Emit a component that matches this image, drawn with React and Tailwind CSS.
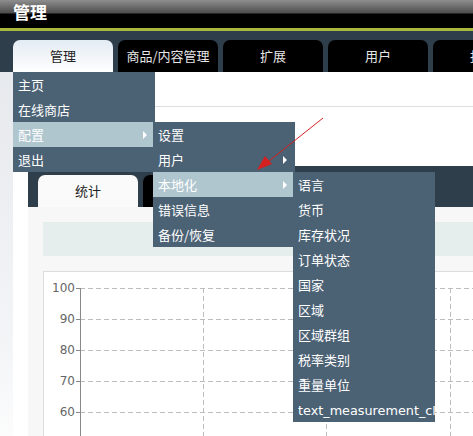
import React from 'react'

const topTabs = ['管理', '商品/内容管理', '扩展', '用户', '报表']

const menuMain = [
  { label: '主页' },
  { label: '在线商店' },
  { label: '配置', active: true, sub: true },
  { label: '退出' },
]

const menuConfig = [
  { label: '设置' },
  { label: '用户', sub: true },
  { label: '本地化', active: true, sub: true },
  { label: '错误信息' },
  { label: '备份/恢复' },
]

const menuLocal = [
  '语言', '货币', '库存状况', '订单状态', '国家', '区域', '区域群组', '税率类别', '重量单位', 'text_measurement_class',
]

function Arrow() {
  return (
    <span className="absolute right-[8px] top-[9px] w-0 h-0 border-y-[4px] border-y-transparent border-l-[4px] border-l-white" />
  )
}

function MenuRow({ label, active, sub }) {
  return (
    <div className={`relative h-[25px] leading-[25px] pl-[5px] whitespace-nowrap overflow-hidden ${active ? 'bg-[#afc6cf]' : ''}`}>
      {label}
      {sub && <Arrow />}
    </div>
  )
}

function Chart() {
  const rows = [100, 90, 80, 70, 60]
  return (
    <svg width="440" height="170" className="block">
      {rows.map((v, i) => {
        const y = 16 + i * 31
        return (
          <g key={v}>
            <line x1="36" x2="440" y1={y + 0.5} y2={y + 0.5} stroke="#bdbdbd" strokeDasharray="5 3" />
            <line x1="32" x2="36" y1={y + 0.5} y2={y + 0.5} stroke="#888" />
            <text x="31" y={y + 4} textAnchor="end" fontSize="12" fill="#666" fontFamily="DejaVu Sans, sans-serif">{v}</text>
          </g>
        )
      })}
      {[159, 282, 406].map(x => (
        <line key={x} x1={x + 0.5} x2={x + 0.5} y1="16" y2="170" stroke="#bdbdbd" strokeDasharray="5 3" />
      ))}
      <line x1="36.5" x2="36.5" y1="16" y2="170" stroke="#888" />
    </svg>
  )
}

export default function App() {
  return (
    <div className="relative w-[473px] h-[436px] overflow-hidden bg-white font-['Noto_Sans_CJK_SC',sans-serif] text-[13px]">
      {/* header */}
      <div className="h-[28px] bg-[linear-gradient(to_bottom,#8e8e8e_0px,#4c4c4c_13px,#000_14px,#000_28px)] pl-[13px] text-white font-bold text-[17px] leading-[24px]">
        管理
      </div>
      <div className="h-[3px] bg-[#a9b83f]" />
      <div className="bg-[#2f3e4b] pt-[9px] pl-[13px] flex gap-[5px] w-[700px]">
        {topTabs.map((t, i) => (
          <div
            key={t}
            className={`w-[100px] h-[32px] shrink-0 rounded-t-[7px] flex items-center justify-center ${i === 0 ? 'bg-gradient-to-b from-[#e3ebf3] to-white text-[#222]' : 'bg-black text-[#e6e6e6]'}`}
          >
            {t}
          </div>
        ))}
      </div>

      {/* body */}
      <div className="flex">
        <div className="w-[13px] shrink-0 bg-[linear-gradient(to_bottom,#e6e9ed,#f4f5f7_70%,#ffffff)]" />
        <div className="flex-1 flex flex-col">
          <div className="h-[35px] shrink-0 border-b border-[#dedede]" />
          <div className="h-[59px] shrink-0" />
          <div className="ml-[15px] w-[600px] shrink-0 bg-[#f7f7f7]">
            <div className="bg-[#2f3e4b] pt-[9px] pl-[10px] flex gap-[5px]">
              <div className="w-[100px] h-[32px] rounded-t-[7px] bg-[#fafafa] text-[#222] flex items-center justify-center">统计</div>
              <div className="w-[100px] h-[32px] rounded-t-[7px] bg-black" />
            </div>
            <div className="pt-[15px] pl-[15px]">
              <div className="h-[34px] bg-[#e5eded]" />
              <div className="mt-[15px] border-t border-l border-[#dddddd] bg-white h-[200px]">
                <Chart />
              </div>
            </div>
          </div>
        </div>
      </div>

      {/* dropdown menus */}
      <div className="absolute left-[13px] top-[72px] w-[142px] bg-[#4b6174] text-white">
        {menuMain.map(m => <MenuRow key={m.label} {...m} />)}
      </div>
      <div className="absolute left-[153px] top-[122px] w-[142px] bg-[#4b6174] text-white">
        {menuConfig.map(m => <MenuRow key={m.label} {...m} />)}
      </div>
      <div className="absolute left-[293px] top-[172px] w-[142px] bg-[#4b6174] text-white">
        {menuLocal.map(l => (
          <MenuRow key={l} label={l.startsWith('text') ? <span className="font-['DejaVu_Sans',sans-serif] text-[12.8px]">{l}</span> : l} />
        ))}
      </div>

      {/* red annotation arrow */}
      <svg className="absolute inset-0 pointer-events-none" width="473" height="436">
        <line x1="323" y1="118" x2="264" y2="165" stroke="#d42020" strokeWidth="1" />
        <polygon points="257,170 272,164 265,156" fill="#d42020" />
      </svg>
    </div>
  )
}
